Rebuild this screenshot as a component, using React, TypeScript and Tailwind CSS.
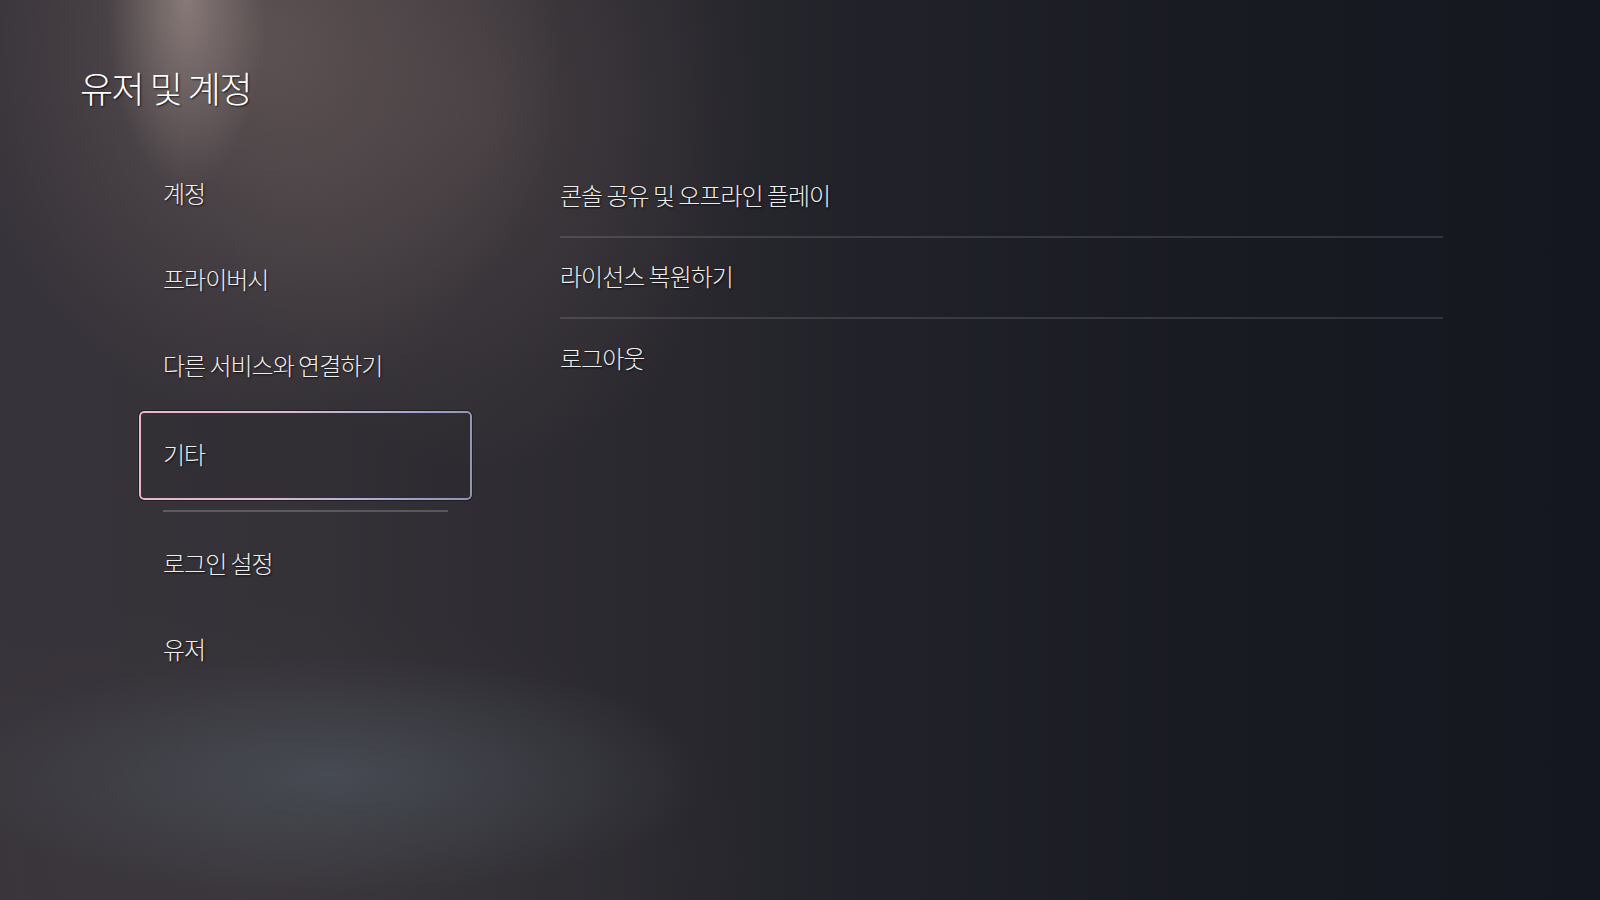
const navItems = ["계정", "프라이버시", "다른 서비스와 연결하기", "기타"];
const navItemsBelow = ["로그인 설정", "유저"];
const detailItems = ["콘솔 공유 및 오프라인 플레이", "라이선스 복원하기", "로그아웃"];

const textShadow = "[text-shadow:1px_1px_2px_rgba(0,0,0,0.75)]";
const itemText = `text-[24px] font-light leading-none tracking-[-1px] text-[#eeeeee] ${textShadow}`;

function NavRow({ label, selected }: { label: string; selected?: boolean }) {
  if (selected) {
    return (
      <div className="relative mt-[2px] flex h-[89px] items-center rounded-[5px] bg-black/5 pb-[3px] pl-6 shadow-[0_0_0_1px_rgba(0,0,0,0.35)]">
        {/* gradient focus ring */}
        <div className="pointer-events-none absolute inset-0 rounded-[5px] bg-[linear-gradient(100deg,#eab6cd_0%,#dcb9d2_40%,#b3aed2_68%,#97a0c8_85%,#8f95ad_100%)] p-[2px] [mask:linear-gradient(#000_0_0)_content-box_exclude,linear-gradient(#000_0_0)]" />
        <span className={itemText}>{label}</span>
      </div>
    );
  }
  return (
    <div className="flex h-[86px] items-center pb-[3px] pl-6">
      <span className={itemText}>{label}</span>
    </div>
  );
}

export default function App() {
  return (
    <div className="relative h-[900px] w-[1600px] overflow-hidden [font-family:'Noto_Sans_CJK_KR','Noto_Sans',sans-serif] [background:radial-gradient(ellipse_80px_190px_at_186px_0px,rgba(172,154,149,0.6),transparent),radial-gradient(ellipse_300px_380px_at_260px_40px,rgba(135,116,112,0.45),transparent),radial-gradient(ellipse_280px_360px_at_480px_110px,rgba(105,88,88,0.38),transparent),radial-gradient(ellipse_380px_120px_at_330px_775px,rgba(84,95,106,0.5),transparent),radial-gradient(ellipse_500px_260px_at_250px_860px,rgba(64,60,64,0.6),transparent),linear-gradient(90deg,#37333a_0%,#343137_20%,#2a292f_40%,#1f2028_58%,#181a22_78%,#151720_100%)]">
      <div className="relative px-20 pt-[69px]">
        <h1 className={`text-[36px] font-light leading-none tracking-[-1.5px] text-white ${textShadow}`}>유저 및 계정</h1>

        <div className="mt-[46px] flex">
          {/* left menu */}
          <nav className="ml-[59px] w-[333px]">
            {navItems.map((label) => (
              <NavRow key={label} label={label} selected={label === "기타"} />
            ))}
            <div className="mx-6 mt-[10px] h-[2px] bg-white/20" />
            <div className="mt-[9px]">
              {navItemsBelow.map((label) => (
                <NavRow key={label} label={label} />
              ))}
            </div>
          </nav>

          {/* detail list */}
          <div className="ml-[88px] mt-[6px] w-[883px]">
            {detailItems.map((label, i) => (
              <div
                key={label}
                className={`flex h-[81px] items-center pb-[3px] ${i < detailItems.length - 1 ? "border-b-2 border-white/[0.12]" : ""}`}
              >
                <span className={itemText}>{label}</span>
              </div>
            ))}
          </div>
        </div>
      </div>
    </div>
  );
}
